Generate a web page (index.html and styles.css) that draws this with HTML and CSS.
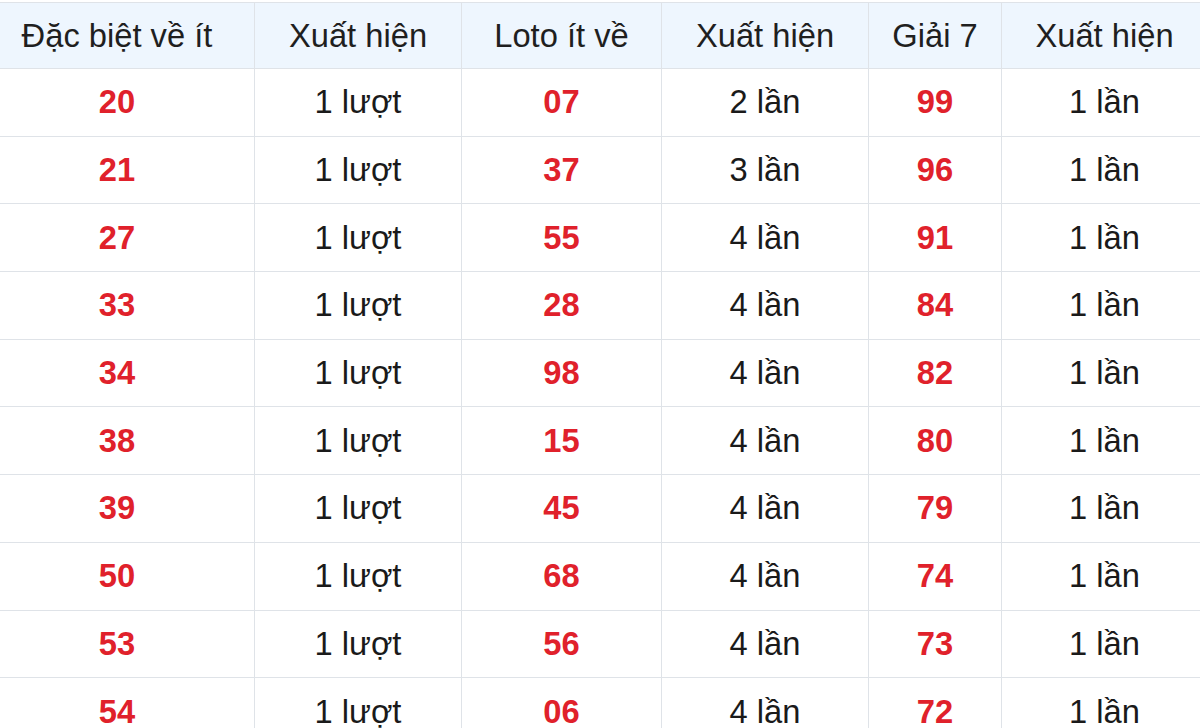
FILE: index.html
```html
<!DOCTYPE html>
<html lang="vi">
<head>
<meta charset="utf-8">
<link rel="stylesheet" href="styles.css">
</head>
<body>
<table class="stats">
  <colgroup>
    <col class="c1"><col class="c2"><col class="c3"><col class="c4"><col class="c5"><col class="c6">
  </colgroup>
  <thead>
    <tr><th>Đặc biệt về ít</th><th>Xuất hiện</th><th>Loto ít về</th><th>Xuất hiện</th><th>Giải 7</th><th>Xuất hiện</th></tr>
  </thead>
  <tbody>
    <tr><td class="num">20</td><td>1 lượt</td><td class="num">07</td><td>2 lần</td><td class="num">99</td><td>1 lần</td></tr>
    <tr><td class="num">21</td><td>1 lượt</td><td class="num">37</td><td>3 lần</td><td class="num">96</td><td>1 lần</td></tr>
    <tr><td class="num">27</td><td>1 lượt</td><td class="num">55</td><td>4 lần</td><td class="num">91</td><td>1 lần</td></tr>
    <tr><td class="num">33</td><td>1 lượt</td><td class="num">28</td><td>4 lần</td><td class="num">84</td><td>1 lần</td></tr>
    <tr><td class="num">34</td><td>1 lượt</td><td class="num">98</td><td>4 lần</td><td class="num">82</td><td>1 lần</td></tr>
    <tr><td class="num">38</td><td>1 lượt</td><td class="num">15</td><td>4 lần</td><td class="num">80</td><td>1 lần</td></tr>
    <tr><td class="num">39</td><td>1 lượt</td><td class="num">45</td><td>4 lần</td><td class="num">79</td><td>1 lần</td></tr>
    <tr><td class="num">50</td><td>1 lượt</td><td class="num">68</td><td>4 lần</td><td class="num">74</td><td>1 lần</td></tr>
    <tr><td class="num">53</td><td>1 lượt</td><td class="num">56</td><td>4 lần</td><td class="num">73</td><td>1 lần</td></tr>
    <tr><td class="num">54</td><td>1 lượt</td><td class="num">06</td><td>4 lần</td><td class="num">72</td><td>1 lần</td></tr>
  </tbody>
</table>
</body>
</html>
```
FILE: styles.css
```css
html, body {
  margin: 0;
  padding: 0;
  background: #ffffff;
  overflow: hidden;
}
body {
  font-family: "Liberation Sans", Arial, sans-serif;
  color: #1a1a1a;
}
.stats {
  border-collapse: collapse;
  table-layout: fixed;
  width: 1228px;
  margin: 2px 0 0 -21px;
  font-size: 32.7px;
}
.c1 { width: 275px; }
.c2 { width: 207px; }
.c3 { width: 200px; }
.c4 { width: 207px; }
.c5 { width: 133px; }
.c6 { width: 206px; }
.stats th,
.stats td {
  border: 1px solid #dfe3e8;
  text-align: center;
  vertical-align: middle;
  padding: 0;
  white-space: nowrap;
}
.stats th {
  height: 65px;
  background: #eef6fe;
  font-weight: normal;
  color: #1f1f1f;
}
.stats td {
  height: 66.7px;
}
.stats td.num {
  color: #e0212b;
  font-weight: bold;
}
```
